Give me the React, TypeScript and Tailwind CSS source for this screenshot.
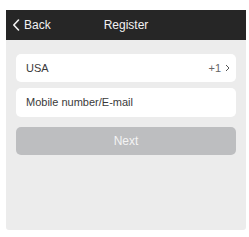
import React from "react";

export default function App() {
  return (
    <div className="w-[249px] h-[237px] bg-white pl-[6px] pt-[10px]" style={{ fontFamily: '"Liberation Sans", Arial, sans-serif' }}>
      <div className="w-[240px] flex flex-col">
        <div className="h-[30px] bg-[#262626] relative flex items-center">
          <div className="flex items-center pl-[6px] text-[#f2f2f2] text-[12px]">
            <svg width="8" height="12" viewBox="0 0 8 12" className="mr-[4px]">
              <path d="M6.5 1 L1.8 6 L6.5 11" stroke="#f2f2f2" strokeWidth="1.6" fill="none" strokeLinecap="round" strokeLinejoin="round" />
            </svg>
            <span>Back</span>
          </div>
          <div className="absolute inset-0 flex items-center justify-center text-[#f2f2f2] text-[12px] pointer-events-none">
            Register
          </div>
        </div>
        <div className="h-[190px] bg-[#ececec] rounded-b-[3px] px-[10px] pt-[14px] flex flex-col">
          <div className="h-[28px] bg-white rounded-[5px] flex items-center justify-between pl-[10px] pr-[6px] text-[11px] text-[#3a3a3a]">
            <span>USA</span>
            <span className="flex items-center gap-[4px] text-[#666]">
              +1
              <svg width="5" height="8" viewBox="0 0 5 8">
                <path d="M1 1 L4 4 L1 7" stroke="#555" strokeWidth="1" fill="none" />
              </svg>
            </span>
          </div>
          <div className="h-[29px] mt-[6px] bg-white rounded-[5px] flex items-center pl-[10px] text-[11px] text-[#3a3a3a]">
            Mobile number/E-mail
          </div>
          <div className="h-[28px] mt-[10px] bg-[#bdbec0] rounded-[5px] flex items-center justify-center text-[12px] text-[#f4f4f4]">
            Next
          </div>
        </div>
      </div>
    </div>
  );
}
